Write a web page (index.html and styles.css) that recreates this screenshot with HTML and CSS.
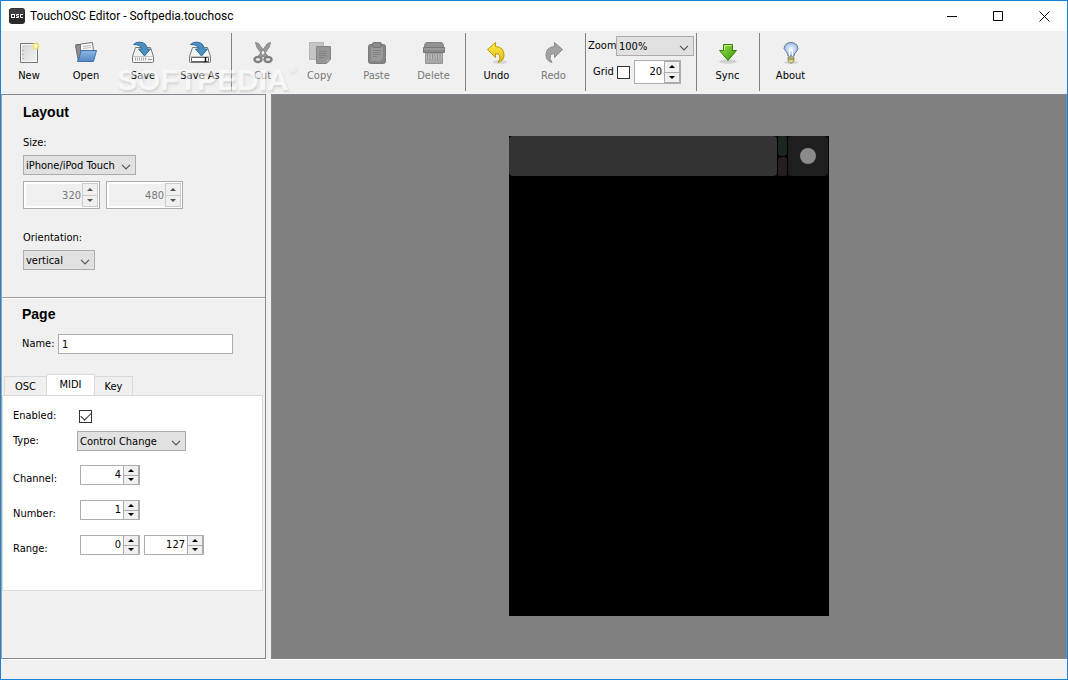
FILE: index.html
```html
<!DOCTYPE html>
<html lang="en">
<head>
<meta charset="utf-8">
<title>TouchOSC Editor - Softpedia.touchosc</title>
<link rel="stylesheet" href="styles.css">
</head>
<body>
<svg class="defs" width="0" height="0" aria-hidden="true">
  <defs>
    <linearGradient id="gPaper" x1="0" y1="0" x2="1" y2="1"><stop offset="0" stop-color="#d2d2d2"/><stop offset="1" stop-color="#f4f4f4"/></linearGradient>
    <linearGradient id="gBlue" x1="0" y1="0" x2="0" y2="1"><stop offset="0" stop-color="#8fb8e4"/><stop offset="1" stop-color="#5585c4"/></linearGradient>
    <linearGradient id="gGold" x1="0" y1="0" x2="0" y2="1"><stop offset="0" stop-color="#fff04a"/><stop offset="1" stop-color="#dfb414"/></linearGradient>
    <linearGradient id="gGreen" x1="0" y1="0" x2="1" y2="1"><stop offset="0" stop-color="#a2df4a"/><stop offset="1" stop-color="#2f9a08"/></linearGradient>
    <radialGradient id="gBulb"><stop offset="0" stop-color="#fff"/><stop offset="1" stop-color="#93b9e8"/></radialGradient>
    <symbol id="drive" viewBox="0 0 24 24">
      <path d="M4.500 6.500h15l3 9v5q0 1-1 1h-19q-1 0-1-1v-5z" fill="#f3f3f3" stroke="#777"/>
      <path d="M2 15.500h20" stroke="#c4c4c4"/>
      <path d="M2.500 3.500Q5 .8 9 1.200q7 .5 7 6.800h3.500L13.500 15 7.500 8h3q0-4.500-8-4.500z" fill="#4b8fbf" stroke="#2d6d9c"/>
    </symbol>
    <symbol id="chev" viewBox="0 0 10 6"><path d="M1 .8l4 4 4-4" fill="none" stroke="#555" stroke-width="1.200"/></symbol>
  </defs>
</svg>
<div class="window">
  <header class="titlebar">
    <svg class="logo" viewBox="0 0 16 16" aria-hidden="true"><rect width="16" height="16" rx="3" fill="#292929"/><rect x=".5" y=".5" width="15" height="7" rx="2.500" fill="#3d3d3d"/><g fill="none" stroke="#fff"><rect x="2.500" y="6.500" width="3" height="3"/><path d="M10 6.500H7.500v1.500h2v1.500H7M14 6.500h-2.500v3H14"/></g></svg>
    <h1>TouchOSC Editor - Softpedia.touchosc</h1>
    <div class="winbtns">
      <button aria-label="Minimize"><svg viewBox="0 0 11 11"><path d="M0 5.500h10"/></svg></button>
      <button aria-label="Maximize"><svg viewBox="0 0 11 11"><path d="M.5.5h9v9h-9z"/></svg></button>
      <button aria-label="Close"><svg viewBox="0 0 11 11"><path d="M.5.5l10 10M10.500.5l-10 10"/></svg></button>
    </div>
  </header>
  <nav class="toolbar">
    <div class="group first">
      <button class="tool"><svg viewBox="0 0 24 24"><path d="M3.500 2.500h17v19h-17z" fill="url(#gPaper)" stroke="#777"/><path d="M4.500 3.500h15v17h-15z" fill="none" stroke="#f7f7f7"/><path d="M6 9v1M6 13v1M6 17v1" stroke="#888"/><circle cx="19" cy="5" r="3.500" fill="#f5e45a" opacity=".8"/><circle cx="19" cy="5" r="1.800" fill="#fffde0"/></svg>New</button>
      <button class="tool"><svg viewBox="0 0 24 24"><path d="M1.500 4.500q0-1 1-1h7v17h-5z" fill="#8d8d8d" stroke="#666"/><path d="M6.500 3l12-1.500 1 9-13 2z" fill="#f8f8f8" stroke="#777"/><path d="M9 5.500l8-1M9 7.500l8-1" stroke="#bbb"/><path d="M7 9.500h15.500L19.500 20.500h-16q2.500-5 3.500-11z" fill="url(#gBlue)" stroke="#416fae"/></svg>Open</button>
      <button class="tool"><svg viewBox="0 0 24 24"><use href="#drive"/><path d="M4 18h12" stroke="#aaa" stroke-width="3" stroke-dasharray="1 1"/><path d="M17 18.500h4" stroke="#999"/></svg>Save</button>
      <button class="tool"><svg viewBox="0 0 24 24"><use href="#drive"/><path d="M3.500 16.500h17v4h-17z" fill="#fff" stroke="#666"/><path d="M17.500 16v5" stroke="#000" stroke-width="1.500"/></svg>Save As</button>
    </div>
    <div class="sep"></div>
    <div class="group padded">
      <button class="tool" disabled><svg viewBox="0 0 24 24"><path d="M4.500 1.500l3 1 9.500 13-3 2-8-11zM19.500 1.500l-3 1-9.500 13 3 2 8-11z" fill="#999" stroke="#888"/><g fill="none" stroke="#808080" stroke-width="2.500"><ellipse cx="7" cy="18.500" rx="3.500" ry="2.500"/><ellipse cx="17" cy="18.500" rx="3.500" ry="2.500"/></g></svg>Cut</button>
      <button class="tool" disabled><svg viewBox="0 0 24 24"><path d="M1.500 1.500h14v17h-14z" fill="#c5c5c5" stroke="#b5b5b5"/><path d="M8.500 5.500h14v13l-4 4h-10z" fill="#969696" stroke="#858585"/><path d="M11 10.500h8M11 12.500h8M11 14.500h7M11 16.500h5" stroke="#838383"/><path d="M22 18.500h-3.500V22z" fill="#aaa"/></svg>Copy</button>
      <button class="tool" disabled><svg viewBox="0 0 24 24"><rect x="3.500" y="3.500" width="17" height="19" rx="2" fill="#868686" stroke="#7b7b7b"/><path d="M6 6h12v11l-3 3H6z" fill="#999"/><rect x="7.500" y="1.500" width="9" height="5" rx="1.500" fill="#8c8c8c" stroke="#777"/><path d="M8 9.500h8M8 11.500h7M8 13.500h8M8 15.500h4" stroke="#828282"/></svg>Paste</button>
      <button class="tool" disabled><svg viewBox="0 0 24 24"><path d="M3.500 12h17v10.500h-17z" fill="#a8a8a8" stroke="#959595"/><path d="M4 13h16v5H4z" fill="#bbb"/><path d="M5.500 13v5M8 13v6M10.500 13v5M13 13v5M15.500 13v6M18 13v5" fill="none" stroke="#8d8d8d"/><path d="M4.500 1.500h15q1.500 0 2 3v3h-19v-3q.5-3 2-3z" fill="#929292" stroke="#838383"/><path d="M1.500 6.500h21v5h-21z" fill="#8b8b8b" stroke="#777"/><path d="M2 8h20" stroke="#aaa"/></svg>Delete</button>
    </div>
    <div class="sep"></div>
    <div class="group padded">
      <button class="tool"><svg viewBox="0 0 24 24"><ellipse cx="15" cy="21" rx="7" ry="2" fill="#d8d8d8"/><path d="M2.500 8.500l8-7v4q8.500.5 8.500 8.500 0 6-6 7.500 3-4 1.500-7-1-2-4-2v4z" fill="url(#gGold)" stroke="#bd9808"/></svg>Undo</button>
      <button class="tool" disabled><svg viewBox="0 0 24 24"><path d="M20.500 8.500l-8-7v4Q4 6 4 14q0 6 6 7.500-3-4-1.500-7 1-2 4-2v4z" fill="#a2a2a2" stroke="#8e8e8e"/></svg>Redo</button>
    </div>
    <div class="sep"></div>
    <div class="view">
      <div class="row"><label for="zoom">Zoom</label><span class="combo wide"><select id="zoom"><option>100%</option></select><svg><use href="#chev"/></svg></span></div>
      <div class="row grid"><label for="grid">Grid</label><input type="checkbox" id="grid"><span class="spin short"><input type="text" value="20" aria-label="Grid size"><span class="steps"><button aria-label="Increase"></button><button aria-label="Decrease"></button></span></span></div>
    </div>
    <div class="sep"></div>
    <div class="group padded">
      <button class="tool"><svg viewBox="0 0 24 24"><ellipse cx="12" cy="20.500" rx="9" ry="2" fill="#d0d0d0"/><path d="M7.500 3.500h9v6h4l-8.500 10-8.500-10h4z" fill="url(#gGreen)" stroke="#348008"/><path d="M8.500 9V4.500h7" fill="none" stroke="#c6ee91"/></svg>Sync</button>
    </div>
    <div class="sep"></div>
    <div class="group padded">
      <button class="tool"><svg viewBox="0 0 24 24"><ellipse cx="12" cy="21.500" rx="7" ry="1.500" fill="#d0d0d0"/><path d="M9 15q0-2-2-4.500T5 7.500q1-6 7-6t7 6q0 1.500-2 3.500t-2 4z" fill="url(#gBulb)" stroke="#6c7893"/><path d="M9 16h6v4l-2 2h-2l-2-2z" fill="#d9d477" stroke="#777" stroke-width=".7"/><path d="M9 18h6" stroke="#7d7740"/><path d="M10.500 15V9h3v6" fill="none" stroke="#fff"/></svg>About</button>
    </div>
    <div class="watermark" aria-hidden="true">SOFTPEDIA<sup>®</sup></div>
  </nav>
  <div class="work">
    <aside class="side">
      <section class="layout">
        <h2>Layout</h2>
        <label for="size" class="line">Size:</label>
        <span class="combo size"><select id="size"><option>iPhone/iPod Touch</option></select><svg><use href="#chev"/></svg></span>
        <div class="pair">
          <span class="spin off"><input type="text" value="320" disabled aria-label="Width"><span class="steps"><button disabled aria-label="Increase"></button><button disabled aria-label="Decrease"></button></span></span>
          <span class="spin off"><input type="text" value="480" disabled aria-label="Height"><span class="steps"><button disabled aria-label="Increase"></button><button disabled aria-label="Decrease"></button></span></span>
        </div>
        <label for="orient" class="line">Orientation:</label>
        <span class="combo orient"><select id="orient"><option>vertical</option></select><svg><use href="#chev"/></svg></span>
      </section>
      <section class="page">
        <h2>Page</h2>
        <div class="name"><label for="name">Name:</label><input type="text" id="name" value="1"></div>
      </section>
      <div class="tabs" role="tablist"><button role="tab">OSC</button><button role="tab" class="active" aria-selected="true">MIDI</button><button role="tab">Key</button></div>
      <div class="panel" role="tabpanel">
        <div class="field"><label for="enabled">Enabled:</label><input type="checkbox" id="enabled" checked></div>
        <div class="field type"><label for="type">Type:</label><span class="combo change"><select id="type"><option>Control Change</option></select><svg><use href="#chev"/></svg></span></div>
        <div class="field num"><label for="channel">Channel:</label><span class="spin"><input type="text" id="channel" value="4"><span class="steps"><button aria-label="Increase"></button><button aria-label="Decrease"></button></span></span></div>
        <div class="field num"><label for="number">Number:</label><span class="spin"><input type="text" id="number" value="1"><span class="steps"><button aria-label="Increase"></button><button aria-label="Decrease"></button></span></span></div>
        <div class="field num"><label for="from">Range:</label><span class="spin"><input type="text" id="from" value="0"><span class="steps"><button aria-label="Increase"></button><button aria-label="Decrease"></button></span></span><span class="spin"><input type="text" value="127" aria-label="Range end"><span class="steps"><button aria-label="Increase"></button><button aria-label="Decrease"></button></span></span></div>
      </div>
    </aside>
    <main class="canvas">
      <div class="device">
        <div class="strip"></div>
        <div class="leds"><i class="tx"></i><i class="rx"></i></div>
        <div class="knob"><i></i></div>
      </div>
    </main>
  </div>
  <footer class="status"></footer>
</div>
</body>
</html>
```

FILE: styles.css
```css
* { box-sizing: border-box; }
body { margin: 0; font: 11px/14px "DejaVu Sans Condensed", "Noto Sans", sans-serif; color: #000; }
button, input, select { font: inherit; color: inherit; margin: 0; padding: 0; border-radius: 0; }
h1, h2 { margin: 0; }
.defs { position: absolute; }
.window { display: flex; flex-direction: column; min-height: 100vh; border: 1px solid #1883d7; background: #f0f0f0; }

.titlebar { display: flex; align-items: center; height: 30px; padding-left: 8px; background: #fff; }
.logo { width: 16px; height: 16px; margin-right: 5px; }
.titlebar h1 { flex: 1; font: 12px/16px Roboto, sans-serif; }
.winbtns { display: flex; }
.winbtns button { display: grid; place-items: center; width: 46px; height: 28px; border: 0; background: none; }
.winbtns svg { width: 11px; height: 11px; fill: none; stroke: #000; }

.toolbar { position: relative; display: flex; height: 63px; }
.group { display: flex; }
.first { padding-right: 1px; margin-right: -1px; }
.padded { padding-right: 1px; }
.tool { display: flex; flex-direction: column; align-items: center; gap: 4px; width: 57px; padding-top: 10px; border: 0; background: none; white-space: nowrap; }
.first .tool { padding-right: 1px; }
.tool svg { width: 24px; height: 24px; }
.tool:disabled { color: #777; }
.sep { width: 1px; margin: 2px 2px 3px; background: #828282; }
.view { width: 106px; padding-top: 4px; }
.row { display: flex; align-items: center; height: 22px; }
.row > label { flex: 1; min-width: 0; white-space: nowrap; }
.row.grid { height: 24px; margin-top: 3px; padding-left: 5px; }
.row.grid > label { flex: none; width: 24px; }
.row input[type="checkbox"] { margin-right: 4px; }
.watermark { position: absolute; left: 116px; top: 33px; font: bold 30px/32px "Liberation Sans", sans-serif; color: #fff; opacity: .5; text-shadow: 1px 2px 2px #bbb; pointer-events: none; }
.watermark sup { font-size: 10px; line-height: 10px; vertical-align: top; }

.combo { position: relative; display: flex; flex: none; height: 20px; }
.combo select { width: 100%; padding: 1px 0 0 2px; border: 1px solid #acacb0; background: #e1e1e1; appearance: none; }
.combo svg { position: absolute; right: 5px; top: 9px; width: 10px; height: 6px; pointer-events: none; }
.wide { width: 78px; }
.size { width: 113px; }
.orient { width: 72px; }
.change { width: 109px; }

input[type="checkbox"] { display: grid; place-items: center; width: 13px; height: 13px; border: 1px solid #333; background: #fff; appearance: none; }
input[type="checkbox"]:checked::before { content: ""; width: 9px; height: 5px; border: solid #333; border-width: 0 0 1px 1px; transform: translateY(-1px) rotate(-45deg); }

.spin { display: flex; width: 60px; height: 20px; border: 1px solid #abadb3; background: #fff; }
.spin input { flex: 1; min-width: 0; padding-right: 2px; border: 0; background: #fff; text-align: right; }
.steps { display: flex; flex-direction: column; width: 16px; background: #acacb0; gap: 1px; }
.steps button { display: grid; place-items: center; flex: 1; min-height: 0; border: solid #acacb0; border-width: 0 1px; background: #f0f0f0; }
.steps button::before { content: ""; border: solid transparent; border-width: 0 3px 3px; border-bottom-color: #000; }
.steps button:last-child::before { border-width: 3px 3px 0; border-top-color: #000; }
.short { width: 47px; height: 24px; }
.short .steps { padding: 1px 0; }
.off { width: 77px; height: 28px; padding: 1px; color: #777; }
.off input { margin: 1px 0 1px 1px; padding: 1px 1px 0 0; background: #f0f0f0; }
.off .steps { background: #ccc; padding: 1px; }
.off .steps button { border: 0; }
.off .steps button::before { border-bottom-color: #555; }
.off .steps button:last-child::before { border-top-color: #555; }

.work { display: flex; flex: 1; }
.side { width: 265px; border: 1px solid #828790; border-left-color: #a0a0a0; }
h2 { font: bold 14px/16px "Liberation Sans", sans-serif; }
.layout { height: 203px; padding: 9px 21px; border-bottom: 1px solid #a0a0a0; }
.line { display: block; margin: 16px 0 5px; }
.pair { display: flex; gap: 6px; margin: 6px 0 22px; }
.pair + .line { margin-top: 0; }
.page { height: 76px; padding: 7px 20px; border-top: 1px solid #fff; }
.name { display: flex; align-items: center; margin-top: 12px; }
.name label { width: 36px; }
.name input { width: 175px; height: 20px; padding-left: 3px; border: 1px solid #abadb3; }

.tabs { display: flex; align-items: flex-end; height: 21px; padding-left: 2px; }
.tabs button { height: 19px; padding: 2px 9px 0; border: 1px solid #d9d9d9; border-bottom: 0; background: #f0f0f0; }
.tabs button:first-child { width: 43px; }
.tabs button:last-child { width: 39px; }
.tabs .active { width: 49px; height: 21px; padding: 0; margin: 0 -1px; background: #fff; }
.panel { height: 196px; margin-right: 2px; padding: 12px 10px; border: 1px solid #d9d9d9; background: #fff; }
.field { display: flex; align-items: center; height: 16px; }
.field label { width: 66px; }
.type { height: 20px; margin: 7px 0 14px; }
.type label { width: 64px; }
.num { height: 20px; margin-bottom: 15px; gap: 4px; }
.num label { width: 63px; padding-top: 8px; }

.canvas { display: flex; flex: 1; align-items: flex-start; justify-content: center; margin-left: 5px; padding: 41px 0; border: 1px solid #828790; background: #808080; }
.device { display: flex; width: 320px; height: 480px; background: #000; }
.strip { flex: 1; height: 40px; border-radius: 4px; background: #333; }
.leds { display: flex; flex-direction: column; gap: 1px; width: 9px; height: 40px; margin: 0 1px; }
.leds i { flex: 1; border-radius: 3px; }
.tx { background: #1b261f; }
.rx { background: #261d1e; }
.knob { display: grid; place-items: center; width: 40px; height: 40px; margin-right: 1px; border-radius: 4px; background: #1e1e1e; }
.knob i { width: 16px; height: 16px; border-radius: 50%; background: #8a8a8a; }
.status { height: 20px; border-top: 1px solid #fff; }
```
